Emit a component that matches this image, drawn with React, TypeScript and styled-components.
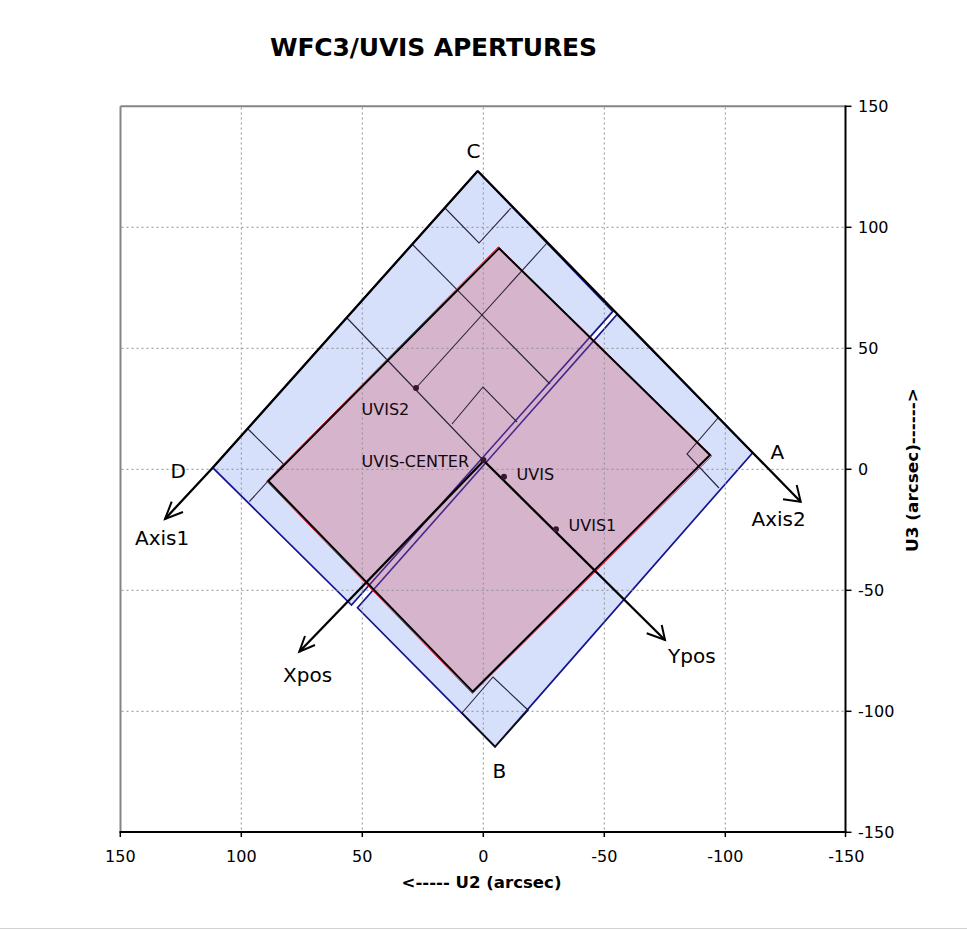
import React from "react";
import styled, { createGlobalStyle } from "styled-components";

const GlobalStyle = createGlobalStyle`
  html, body { margin: 0; padding: 0; background: #ffffff; }
  #root { width: 967px; }
`;

const Page = styled.div`
  width: 967px;
  height: 930px;
  display: flex;
  flex-direction: column;
  background: #ffffff;
  overflow: hidden;
`;

const TitleBar = styled.header`
  box-sizing: border-box;
  height: 80px;
  padding: 35px 0 0 270px;
`;

const Title = styled.h1`
  margin: 0;
  font: 700 25px/1 "DejaVu Sans", Verdana, sans-serif;
  color: #000;
  white-space: nowrap;
  letter-spacing: -0.15px;
`;

const ChartSvg = styled.svg`
  display: block;
  width: 967px;
  height: 848px;
  flex: none;
`;

const BottomRule = styled.div`
  height: 1px;
  background: #d2d2d2;
  flex: none;
`;

const TickLabel = styled.text`
  font: 400 16px "DejaVu Sans", Verdana, sans-serif;
  fill: #000;
`;

const PointLabel = styled.text`
  font: 400 16px "DejaVu Sans", Verdana, sans-serif;
  fill: #120810;
`;

const CornerLabel = styled.text`
  font: 400 20px "DejaVu Sans", Verdana, sans-serif;
  fill: #000;
`;

const AxisTitle = styled.text`
  font: 700 15px "DejaVu Sans", Verdana, sans-serif;
  fill: #000;
`;

const X = (u: number) => 483.3 - 2.42 * u;
const Y = (v: number) => 469.3 - 2.42 * v;

const TICKS = [150, 100, 50, 0, -50, -100, -150];
const GRID = [100, 50, 0, -50, -100];

type P = [number, number];
const pts = (a: P[]) => a.map((p) => p.join(",")).join(" ");

const C: P = [477.7, 171];
const A: P = [752.7, 452.7];
const B: P = [495, 746.7];
const D: P = [212.7, 467.7];
const GAP2_TOP: P = [612.8, 311.4];
const GAP2_BOT: P = [351.5, 605];
const GAP1_TOP: P = [617, 314.4];
const GAP1_BOT: P = [357.5, 607.8];

const PINK: P[] = [
  [499, 248.3],
  [710, 455],
  [472.7, 691.7],
  [268.3, 481],
];
const RED: P[] = [
  [498.3, 246.8],
  [711.8, 456],
  [472.5, 693.6],
  [266.6, 481.2],
];

const THIN_LINES: P[][] = [
  [[445, 208], [479, 243], [511, 208]],
  [[248, 429], [283.5, 464], [249.3, 501.7]],
  [[718, 418], [687, 454], [719, 488]],
  [[462, 713], [493, 677], [528, 710]],
  [[413, 245], [550, 384]],
  [[547, 243], [416, 388]],
  [[347, 318], [483, 460]],
  [[452, 424], [483, 387], [517, 422]],
];

const ARROWS: { line: P[]; head: P[] }[] = [
  { line: [C, D, [165, 519]], head: [[183, 512], [165, 519], [171.7, 501.7]] },
  { line: [C, A, [800.7, 501.7]], head: [[783, 499.3], [800.7, 501.7], [796.7, 485]] },
  { line: [[483.5, 461], [299.3, 651.7]], head: [[305, 636], [299.3, 651.7], [315, 645]] },
  { line: [[483.5, 460.5], [665, 640]], head: [[646.7, 633.3], [665, 640], [661.7, 625]] },
];

const DOTS: P[] = [
  [416, 388],
  [483.4, 460],
  [504, 476.8],
  [556, 529.3],
];

const POINT_LABELS: { t: string; x: number; y: number }[] = [
  { t: "UVIS2", x: 361.5, y: 415 },
  { t: "UVIS-CENTER", x: 361.5, y: 466.5 },
  { t: "UVIS", x: 516.5, y: 479.5 },
  { t: "UVIS1", x: 568.5, y: 531 },
];

const CORNER_LABELS: { t: string; x: number; y: number }[] = [
  { t: "C", x: 466.5, y: 157.5 },
  { t: "A", x: 770.5, y: 458.5 },
  { t: "D", x: 170.5, y: 477.5 },
  { t: "B", x: 492.5, y: 778 },
  { t: "Axis1", x: 135, y: 545 },
  { t: "Axis2", x: 751.5, y: 526 },
  { t: "Xpos", x: 283, y: 681.5 },
  { t: "Ypos", x: 668, y: 663 },
];

const BLUE_FILL = "#d6e0fb";
const PINK_FILL = "#d6b4cb";
const NAVY = "#15158f";
const PURPLE = "#45268a";
const THIN = "#28223c";

export default function App() {
  return (
    <>
      <GlobalStyle />
      <Page>
        <TitleBar>
          <Title>WFC3/UVIS APERTURES</Title>
        </TitleBar>
        <ChartSvg viewBox="0 80 967 848" xmlns="http://www.w3.org/2000/svg">
          <defs>
            <clipPath id="pinkClip">
              <polygon points={pts(PINK)} />
            </clipPath>
          </defs>

          {/* plot frame (top / left) */}
          <line x1={120.5} y1={106.3} x2={845.5} y2={106.3} stroke="#858585" strokeWidth={2} />
          <line x1={120.5} y1={106.3} x2={120.5} y2={832} stroke="#858585" strokeWidth={2} />

          {/* detector chips */}
          <polygon points={pts([C, GAP2_TOP, GAP2_BOT, D])} fill={BLUE_FILL} stroke={NAVY} strokeWidth={1.7} strokeLinejoin="miter" />
          <polygon points={pts([GAP1_TOP, A, B, GAP1_BOT])} fill={BLUE_FILL} stroke={NAVY} strokeWidth={1.7} strokeLinejoin="miter" />

          {/* pink aperture fill */}
          <polygon points={pts(PINK)} fill={PINK_FILL} />

          {/* gridlines */}
          {GRID.map((v) => (
            <line key={`gx${v}`} x1={X(v)} y1={107.5} x2={X(v)} y2={831} stroke="#8f8f8f" strokeWidth={1} strokeDasharray="2 3" />
          ))}
          {GRID.map((v) => (
            <line key={`gy${v}`} x1={121.5} y1={Y(v)} x2={845} y2={Y(v)} stroke="#8f8f8f" strokeWidth={1} strokeDasharray="2 3" />
          ))}

          {/* chip gap lines inside pink aperture */}
          <g clipPath="url(#pinkClip)">
            <line x1={GAP2_TOP[0]} y1={GAP2_TOP[1]} x2={GAP2_BOT[0]} y2={GAP2_BOT[1]} stroke={PURPLE} strokeWidth={1.6} />
            <line x1={GAP1_TOP[0]} y1={GAP1_TOP[1]} x2={GAP1_BOT[0]} y2={GAP1_BOT[1]} stroke={PURPLE} strokeWidth={1.6} />
          </g>

          {/* sub-aperture outlines */}
          {THIN_LINES.map((l, i) => (
            <polyline key={`t${i}`} points={pts(l)} fill="none" stroke={THIN} strokeWidth={1.1} />
          ))}

          {/* aperture outline */}
          <polygon points={pts(RED)} fill="none" stroke="#e0203a" strokeWidth={1} />
          <polygon points={pts(PINK)} fill="none" stroke="#000" strokeWidth={2} strokeLinejoin="miter" />

          {/* B corner edges */}
          <polyline points={pts([[461.5, 712.5], B, [528.5, 709.5]])} fill="none" stroke="#111" strokeWidth={1.7} />

          {/* axes arrows */}
          {ARROWS.map((a, i) => (
            <g key={`a${i}`}>
              <polyline points={pts(a.line)} fill="none" stroke="#000" strokeWidth={2.3} strokeLinejoin="miter" />
              <polyline points={pts(a.head)} fill="none" stroke="#000" strokeWidth={2} strokeLinejoin="miter" />
            </g>
          ))}

          {/* reference points */}
          {DOTS.map((d, i) => (
            <circle key={`d${i}`} cx={d[0]} cy={d[1]} r={3} fill="#3a1530" />
          ))}

          {POINT_LABELS.map((l) => (
            <PointLabel key={l.t} x={l.x} y={l.y}>
              {l.t}
            </PointLabel>
          ))}
          {CORNER_LABELS.map((l) => (
            <CornerLabel key={l.t} x={l.x} y={l.y}>
              {l.t}
            </CornerLabel>
          ))}

          {/* right axis */}
          <line x1={845.5} y1={105.5} x2={845.5} y2={833} stroke="#000" strokeWidth={2} />
          {TICKS.map((v) => (
            <g key={`ry${v}`}>
              <line x1={845.5} y1={Y(v)} x2={851.5} y2={Y(v)} stroke="#000" strokeWidth={1.5} />
              <TickLabel x={858} y={Y(v) + 5.8}>
                {v}
              </TickLabel>
            </g>
          ))}

          {/* bottom axis */}
          <line x1={119.5} y1={832} x2={846.5} y2={832} stroke="#000" strokeWidth={2} />
          {TICKS.map((v) => (
            <g key={`bx${v}`}>
              <line x1={Math.min(X(v), 845.5)} y1={832} x2={Math.min(X(v), 845.5)} y2={837} stroke="#000" strokeWidth={1.5} />
              <TickLabel x={X(v)} y={861.5} textAnchor="middle">
                {v}
              </TickLabel>
            </g>
          ))}

          <AxisTitle x={401.5} y={887.5} textLength={160} lengthAdjust="spacingAndGlyphs">
            {"<----- U2 (arcsec)"}
          </AxisTitle>
          <AxisTitle transform="translate(917.5 552) rotate(-90)" x={0} y={0} textLength={164} lengthAdjust="spacingAndGlyphs">
            {"U3 (arcsec)------>"}
          </AxisTitle>
        </ChartSvg>
        <BottomRule />
      </Page>
    </>
  );
}
